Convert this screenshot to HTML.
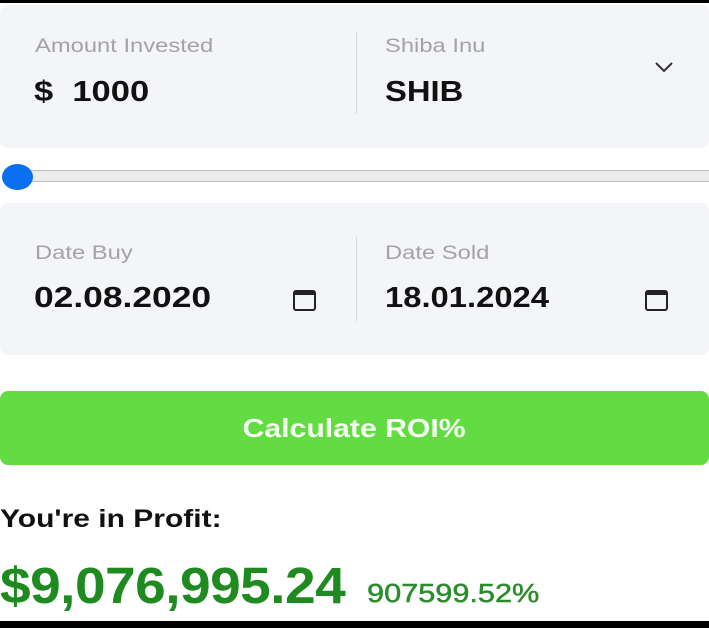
<!DOCTYPE html>
<html><head><meta charset="utf-8"><style>
*{box-sizing:border-box;margin:0;padding:0}
html,body{width:709px;height:628px;overflow:hidden;background:#fff;font-family:"Liberation Sans",sans-serif;position:relative}
.bar{position:absolute;left:0;width:709px;background:#000}
.card{position:absolute;left:0;width:709px;background:#f4f5f9;border-radius:8px}
.lbl{position:absolute;font-size:19px;color:#a3a3a3;transform:scaleX(1.25);transform-origin:left;white-space:nowrap}
.val{position:absolute;font-size:29px;font-weight:bold;color:#111;transform:scaleX(1.19);transform-origin:left;white-space:nowrap}
.div{position:absolute;width:1px;background:#d8d8d8}
.cal{position:absolute;width:23px;height:21px;border:2px solid #222;border-top-width:5px;border-radius:3px}
</style></head><body>
<div class="bar" style="top:0;height:3px"></div>
<div class="card" style="top:5px;height:143px">
  <div class="lbl" style="left:35px;top:31px">Amount Invested</div>
  <div class="val" style="left:34px;top:71px">$&nbsp;&nbsp;1000</div>
  <div class="div" style="left:356px;top:27px;height:82px"></div>
  <div class="lbl" style="left:385px;top:31px">Shiba Inu</div>
  <div class="val" style="left:385px;top:71px;transform:scaleX(1.13)">SHIB</div>
  <svg style="position:absolute;left:653px;top:55px" width="22" height="14" viewBox="0 0 22 14"><path d="M3 3l8 8 8-8" fill="none" stroke="#333" stroke-width="2"/></svg>
</div>
<div style="position:absolute;left:4px;top:170px;width:720px;height:12px;background:#ececec;border:1.5px solid #bdbdbd;border-radius:6px"></div>
<div style="position:absolute;left:2px;top:164px;width:31px;height:26px;border-radius:50%;background:#0b6ff2"></div>
<div class="card" style="top:203px;height:152px">
  <div class="lbl" style="left:35px;top:40px">Date Buy</div>
  <div class="val" style="left:34px;top:79px;transform:scaleX(1.22)">02.08.2020</div>
  <div class="cal" style="left:293px;top:87px"></div>
  <div class="div" style="left:356px;top:34px;height:84px"></div>
  <div class="lbl" style="left:385px;top:40px">Date Sold</div>
  <div class="val" style="left:385px;top:79px;transform:scaleX(1.13)">18.01.2024</div>
  <div class="cal" style="left:645px;top:87px"></div>
</div>
<div style="position:absolute;left:0;top:391px;width:709px;height:74px;background:#62dc42;border-radius:8px;color:#f4fff0;font-weight:bold;font-size:26px;text-align:center;line-height:74px"><span style="display:inline-block;transform:scaleX(1.16)">Calculate ROI%</span></div>
<div style="position:absolute;left:0;top:505px;font-size:25px;font-weight:bold;color:#111;transform:scaleX(1.2);transform-origin:left;white-space:nowrap">You're in Profit:</div>
<div style="position:absolute;left:0;top:556px;font-size:51px;font-weight:bold;color:#1f8a1f;letter-spacing:-0.5px;transform:scaleX(1.08);transform-origin:left;white-space:nowrap">$9,076,995.24</div>
<div style="position:absolute;left:367px;top:578px;font-size:26px;color:#2b8d2b;-webkit-text-stroke:0.5px #2b8d2b;transform:scaleX(1.18);transform-origin:left;white-space:nowrap">907599.52%</div>
<div class="bar" style="top:621px;height:7px"></div>
</body></html>
